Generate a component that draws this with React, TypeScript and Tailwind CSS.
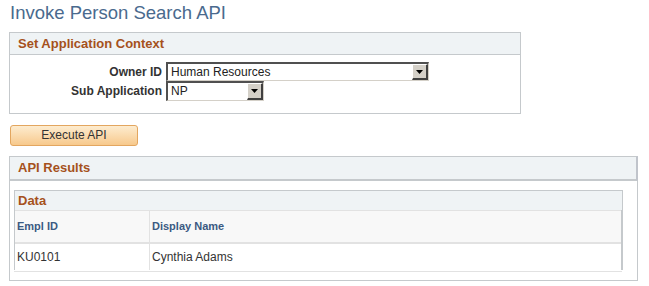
const labelClass = "w-[156px] pr-[4px] text-right text-[12px] font-bold text-[#333333]";

const Select = ({ value, width, height }: { value: string; width: string; height: string }) => (
  <div
    className={`flex ${width} ${height} border-t-2 border-l-2 border-t-[#505050] border-l-[#505050] border-b border-r border-b-[#d4d0c8] border-r-[#d4d0c8] bg-white`}
  >
    <span className="flex-1 pl-[3px] text-[12px] leading-[16px] text-[#222222]">{value}</span>
    <span className="flex w-[16px] items-center justify-center border-t border-l border-t-white border-l-white border-r-2 border-b-2 border-r-[#404040] border-b-[#404040] bg-[#d4d0c8]">
      <svg width="7" height="4" viewBox="0 0 7 4">
        <path d="M0 0h7L3.5 4z" fill="#000" />
      </svg>
    </span>
  </div>
);

const SectionHeader = ({ title }: { title: string }) => (
  <div className="h-[23px] border-b border-[#c5c9cc] bg-[#eff3f5] pl-[8px] text-[13px] font-bold leading-[21px] text-[#a5511c]">
    {title}
  </div>
);

export default function App() {
  return (
    <div className="h-[286px] w-[649px] bg-white pt-[2px] font-['Liberation_Sans',Arial,sans-serif]">
      <h1 className="pl-[10px] text-[18.5px] leading-[22px] text-[#4a6a8e]">Invoke Person Search API</h1>

      <div className="ml-[9px] mt-[8px] h-[82px] w-[512px] border border-[#c5c9cc]">
        <div className="-mx-px -mt-px h-[23px] border border-[#c5c9cc] bg-[#eff3f5] pl-[8px] text-[13px] font-bold leading-[21px] text-[#a5511c]">
          Set Application Context
        </div>
        <div className="pt-[7px]">
          <div className="flex h-[19px] items-center">
            <span className={labelClass}>Owner ID</span>
            <Select value="Human Resources" width="w-[263px]" height="h-[19px]" />
          </div>
          <div className="flex h-[20px] items-center">
            <span className={labelClass}>Sub Application</span>
            <Select value="NP" width="w-[98px]" height="h-[20px]" />
          </div>
        </div>
      </div>

      <button
        type="button"
        className="ml-[10px] mt-[11px] h-[21px] w-[128px] rounded-[3px] border border-[#e3a65f] bg-gradient-to-b from-[#fdeccf] to-[#f7c98c] text-[12px] leading-[19px] text-[#333333]"
      >
        Execute API
      </button>

      <div className="ml-[9px] mt-[10px] h-[125px] w-[629px] border border-[#c5c9cc]">
        <div className="-mx-px -mt-px">
          <div className="border border-r-2 border-[#c5c9cc] border-r-[#c0c4cb]">
            <SectionHeader title="API Results" />
          </div>
        </div>
        <div className="ml-[4px] mt-[9px] w-[609px]">
          <div className="h-[20px] border border-b-0 border-[#c5c9cc] bg-[#eff3f5] pl-[3px] text-[13px] font-bold leading-[19px] text-[#a5511c]">
            Data
          </div>
          <div className="border-l border-r-2 border-l-[#c5c9cc] border-r-[#c5c9cc]">
            <div className="flex h-[34px] items-center border-t border-b-2 border-[#e2e2e2] bg-[#f8f8f8] text-[11px] font-bold text-[#3b5a82]">
              <span className="w-[135px] border-r border-[#e2e2e2] pl-[2px] leading-[31px]">Empl ID</span>
              <span className="pl-[2px]">Display Name</span>
            </div>
            <div className="flex h-[26px] items-center bg-white text-[12px] text-[#333333]">
              <span className="w-[135px] border-r border-[#e2e2e2] pl-[2px] leading-[26px]">KU0101</span>
              <span className="pl-[2px]">Cynthia Adams</span>
            </div>
          </div>
          <div className="h-[2px] w-[608px] border-b border-[#e2e2e2]" />
        </div>
      </div>
    </div>
  );
}
